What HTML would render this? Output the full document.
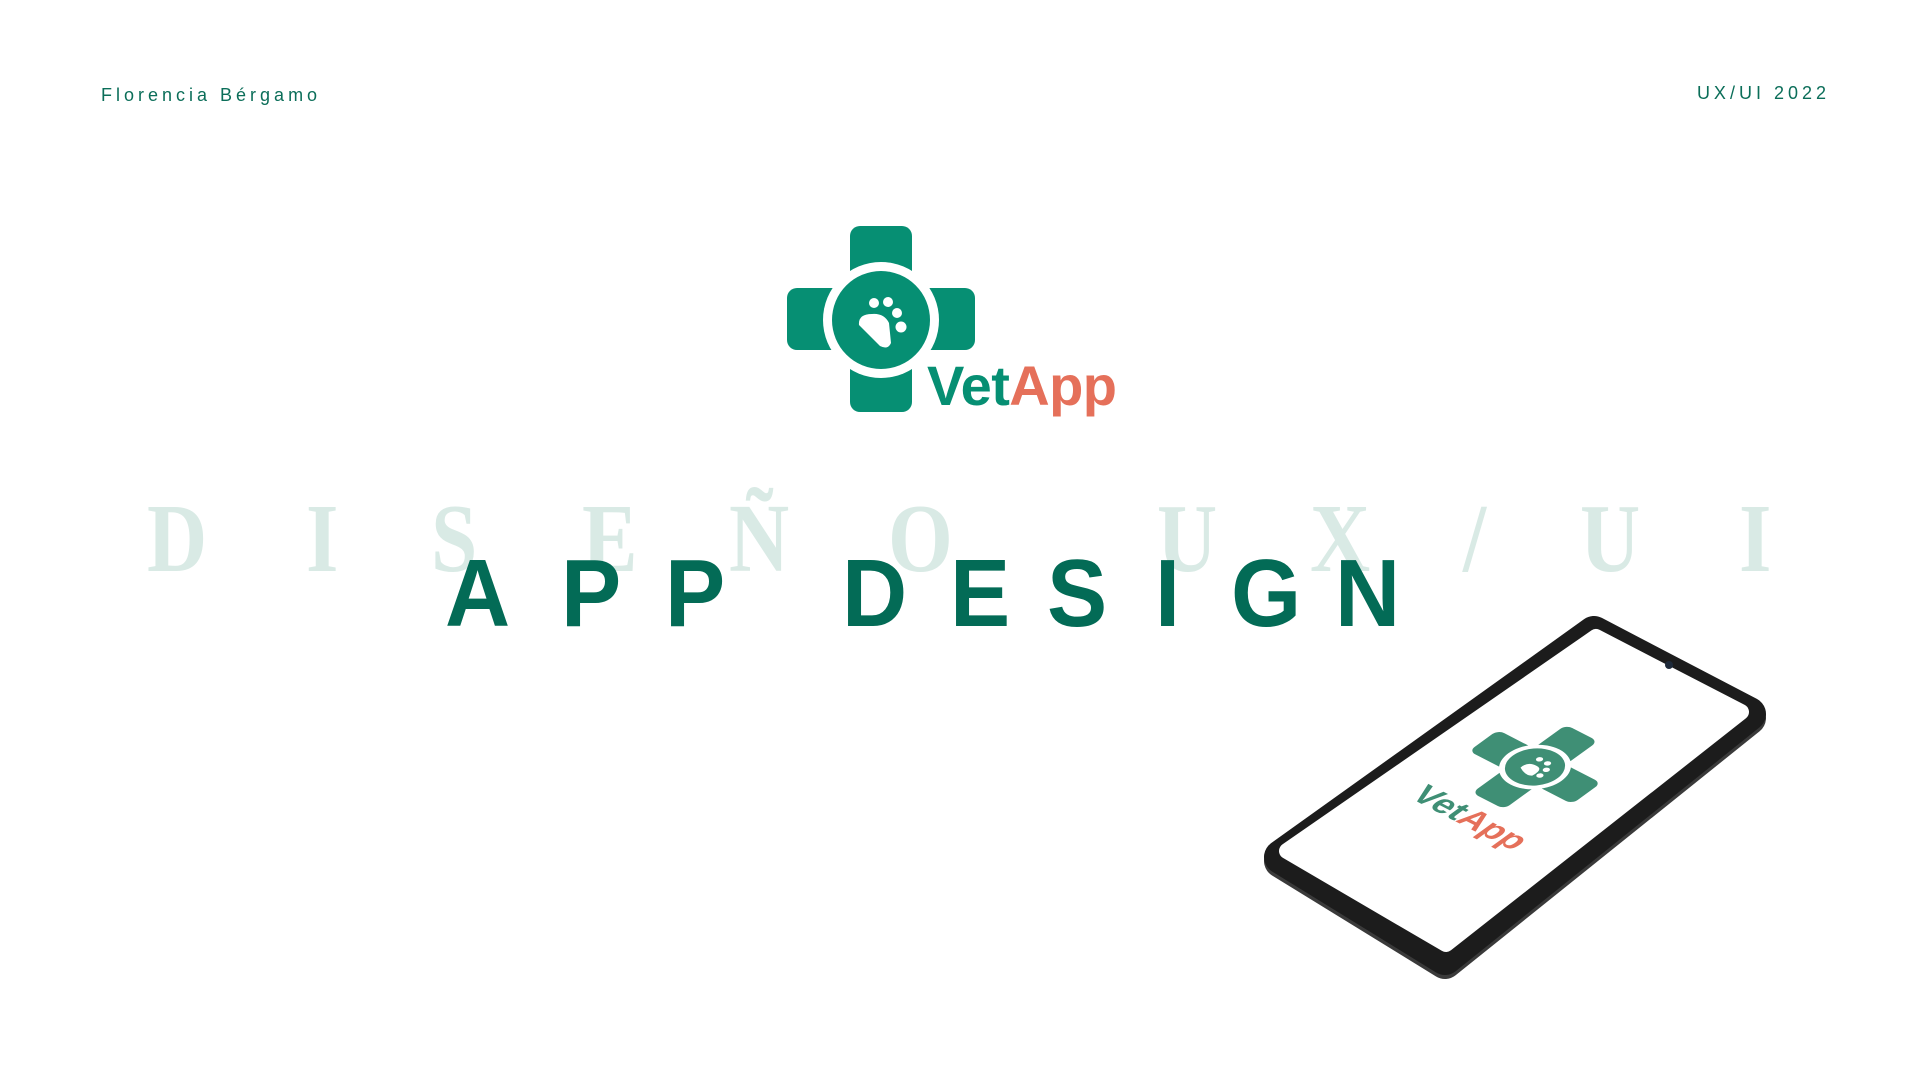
<!DOCTYPE html>
<html><head><meta charset="utf-8"><style>
html,body{margin:0;padding:0;width:1920px;height:1080px;overflow:hidden;background:#fff}
.t{position:absolute;font-family:"Liberation Sans",sans-serif;color:#0b6e59;font-size:18px;letter-spacing:4px;line-height:1}
.bg{position:absolute;top:490px;font-family:"Liberation Serif",serif;font-weight:bold;font-size:98px;color:#d9eae5;line-height:1;transform:scaleX(0.85);transform-origin:left}
.fg{position:absolute;top:546px;font-family:"Liberation Sans",sans-serif;font-weight:bold;font-size:96px;color:#036b56;line-height:1;transform:scaleX(0.94);transform-origin:left}
</style></head><body>
<div class="t" style="left:101px;top:86px">Florencia Bérgamo</div>
<div class="t" style="right:90px;top:84px;letter-spacing:4px">UX/UI 2022</div>

<div class="bg" style="left:147px">D</div>
<div class="bg" style="left:306px">I</div>
<div class="bg" style="left:431px">S</div>
<div class="bg" style="left:582px">E</div>
<div class="bg" style="left:729px">Ñ</div>
<div class="bg" style="left:888px">O</div>
<div class="bg" style="left:1157px">U</div>
<div class="bg" style="left:1310px">X</div>
<div class="bg" style="left:1463px">/</div>
<div class="bg" style="left:1580px">U</div>
<div class="bg" style="left:1739px">I</div>

<div class="fg" style="left:445px">A</div>
<div class="fg" style="left:561px">P</div>
<div class="fg" style="left:665px">P</div>
<div class="fg" style="left:842px">D</div>
<div class="fg" style="left:950px">E</div>
<div class="fg" style="left:1047px">S</div>
<div class="fg" style="left:1155px">I</div>
<div class="fg" style="left:1231px">G</div>
<div class="fg" style="left:1335px">N</div>

<svg width="1920" height="1080" style="position:absolute;left:0;top:0">
 <g fill="#068f73">
  <rect x="850" y="226" width="62" height="186" rx="10"/>
  <rect x="787" y="288" width="188" height="62" rx="10"/>
 </g>
 <circle cx="881" cy="320" r="58" fill="#fff"/>
 <circle cx="881" cy="320" r="49" fill="#068f73"/>
 <g fill="#fff">
  <circle cx="874" cy="303" r="5"/><circle cx="888" cy="302" r="5"/>
  <circle cx="897" cy="313" r="5"/><circle cx="901" cy="327" r="5.5"/>
  <path d="M859 325 Q858 314 872 314 Q884 313 889 323 L891 343 Q888 350 880 346 Z"/>
 </g>
 <text x="927" y="405" font-family="Liberation Sans,sans-serif" font-weight="bold" font-size="56" fill="#068f73" textLength="190">Vet<tspan fill="#e5705a">App</tspan></text>

 <path d="M1594 637 L1749 718 L1445 962 L1281 861 Z" fill="#3a3a3a" stroke="#3a3a3a" stroke-width="34" stroke-linejoin="round"/>
 <path d="M1594 633 L1749 714 L1445 958 L1281 857 Z" fill="#1c1c1c" stroke="#1c1c1c" stroke-width="34" stroke-linejoin="round"/>
 <path d="M1596 637 L1741 712 L1446 944 L1287 851 Z" fill="#fff" stroke="#fff" stroke-width="16" stroke-linejoin="round"/>
 <circle cx="1669" cy="665" r="4" fill="#1e2a3a"/>
 <g transform="matrix(0.889,0.457,-0.81,0.586,1535,767)">
  <g fill="#3f8f75">
   <rect x="-18" y="-58" width="36" height="116" rx="7"/>
   <rect x="-58" y="-18" width="116" height="36" rx="7"/>
  </g>
  <circle r="30" fill="#fff"/>
  <circle r="25" fill="#3f8f75"/>
  <g fill="#fff"><circle cx="-4" cy="-10" r="3"/><circle cx="5" cy="-10" r="3"/><circle cx="10" cy="-3" r="3"/><circle cx="11" cy="6" r="3"/><path d="M-9 8 Q-10 -2 0 -2 Q8 -2 6 10 Q2 14 -9 8Z"/></g>
  <text x="-55" y="95" font-family="Liberation Sans,sans-serif" font-weight="bold" font-size="34" fill="#3f8f75">Vet<tspan fill="#e5705a">App</tspan></text>
 </g>
</svg>
</body></html>
